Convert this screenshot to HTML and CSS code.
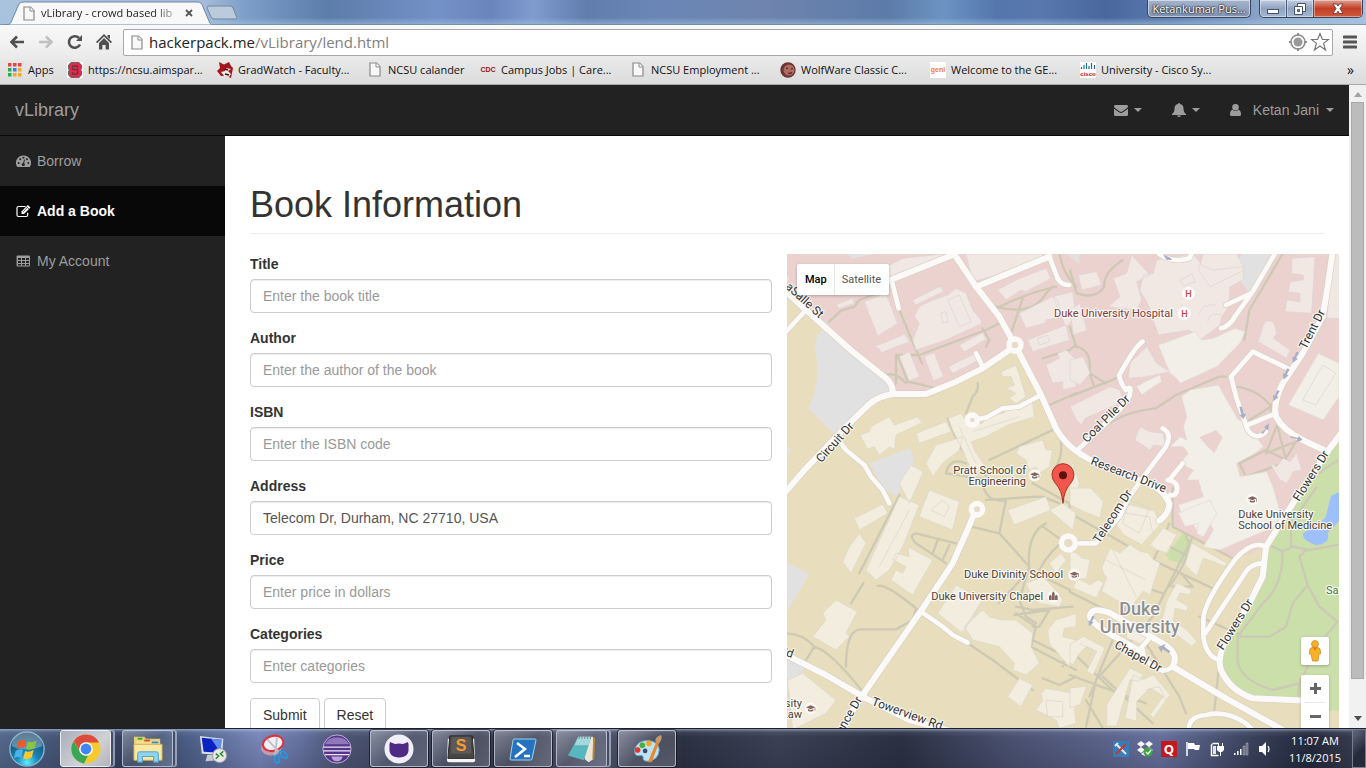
FILE: index.html
```html
<!DOCTYPE html>
<html lang="en">
<head>
<meta charset="utf-8">
<title>vLibrary - crowd based library</title>
<link rel="stylesheet" href="styles.css">
</head>
<body>
<svg class="defs" aria-hidden="true">
  <symbol id="i-page" viewBox="0 0 12 15"><path d="M1 1h6.500l3.500 3.500V14H1z" fill="#f8f8f8" stroke="#8a8a8a" stroke-width="1.200"/><path d="M7 1v4h4" fill="#fff" stroke="#8a8a8a"/></symbol>
  <symbol id="i-cap" viewBox="0 0 40 40"><circle cx="20" cy="20" r="18" fill="#fbf9f5"/><path d="M6 17l14-6 14 6-14 6zM12 22v5q8 5 16 0v-5l-8 4zM32 18h2v9h-2z" fill="#83665f"/></symbol>
  <symbol id="i-arrow" viewBox="0 0 24 34"><path d="M15 0l8 3-9 16 6 2L4 34 3 15l5 2z" fill="#a9afc9"/></symbol>
</svg>
<div class="window">
  <header class="titlebar">
    <div class="tab">
      <svg class="tab-shape" viewBox="0 0 206 24" preserveAspectRatio="none" aria-hidden="true"><path d="M0 24c5 0 6-2 7-5l6-14c1-3 3-4 6-4h173c4 0 5 2 6 5l6 14c1 3 2 4 6 4z" fill="#f8f8f9" stroke="#6f87a8"/></svg>
      <svg class="ico-page" aria-hidden="true"><use href="#i-page"/></svg>
      <span class="tab-title">vLibrary - crowd based lib</span>
      <button class="tab-close" aria-label="Close tab"><svg viewBox="0 0 8 8"><path d="M1 1l6 6M7 1L1 7" stroke="#555" stroke-width="1.800"/></svg></button>
    </div>
    <button class="new-tab" aria-label="New tab"><svg viewBox="0 0 32 15"><path d="M1 3q0-2 2-2h21q2 0 3 2l4 10q0 1-2 1H8q-2 0-3-2z" fill="#bccbdc" stroke="#74869f"/></svg></button>
    <div class="win-controls">
      <button class="profile">Ketankumar Pus...</button>
      <div class="win-buttons">
        <button aria-label="Minimize"><svg viewBox="0 0 14 12"><rect x="1.500" y="6.500" width="11" height="4" fill="#fff" stroke="#4a5468"/></svg></button>
        <button aria-label="Restore"><svg viewBox="0 0 14 12"><path d="M4.500.5h8v8h-8z" fill="#fff" stroke="#4a5468"/><path d="M1.500 3.500h8v8h-8z" fill="#fff" stroke="#4a5468"/><path d="M4.500 6.500h2v2h-2z" fill="#8894ac" stroke="#4a5468"/></svg></button>
        <button class="win-close" aria-label="Close"><svg viewBox="0 0 14 12"><path d="M2 1h3.500L7 3l1.500-2H12L9 5.500l3 5H8.500L7 8.200 5.500 10.500H2l3-5z" fill="#fff" stroke="#5a3038" stroke-width=".8"/></svg></button>
      </div>
    </div>
  </header>
  <div class="toolbar">
    <button class="tool" aria-label="Back"><svg viewBox="0 0 16 16"><path d="M15 8H3M8 2.500L2.500 8 8 13.500" fill="none" stroke="#505050" stroke-width="2.600"/></svg></button>
    <button class="tool" aria-label="Forward"><svg viewBox="0 0 16 16"><path d="M1 8h12M8 2.500L13.500 8 8 13.500" fill="none" stroke="#c0c0c0" stroke-width="2.600"/></svg></button>
    <button class="tool" aria-label="Reload"><svg viewBox="0 0 16 16"><path d="M13 10.500A5.800 5.800 0 1 1 12 4" fill="none" stroke="#505050" stroke-width="2.600"/><path d="M15 1v6H9z" fill="#505050"/></svg></button>
    <button class="tool" aria-label="Home"><svg viewBox="0 0 16 16"><path d="M8 0l8 8-1.200 1.200L8 2.600 1.200 9.200 0 8z" fill="#505050"/><path d="M11.500 1H14v4l-2.500-2zM3 9l5-5 5 5v6.500H9.600V11H6.400v4.500H3z" fill="#505050"/></svg></button>
    <div class="omnibox">
      <svg class="ico-page" aria-hidden="true"><use href="#i-page"/></svg>
      <span class="url">hackerpack.me<span>/vLibrary/lend.html</span></span>
      <svg class="ico-20" viewBox="0 0 20 20" aria-hidden="true"><circle cx="10" cy="10" r="7" fill="none" stroke="#8c8c8c" stroke-width="1.500"/><circle cx="10" cy="10" r="4.500" fill="#999"/><path d="M10 1v3M10 16v3M1 10h3M16 10h3" stroke="#8c8c8c" stroke-width="2"/></svg>
      <svg class="ico-20" viewBox="0 0 20 20" aria-hidden="true"><path d="M10 1.500l2.400 6h6.100l-5 3.900 2 6.600-5.500-4-5.500 4 2-6.600-5-3.900h6.100z" fill="#fff" stroke="#777" stroke-width="1.200"/></svg>
    </div>
    <button class="tool menu" aria-label="Menu"><svg viewBox="0 0 14 14"><path d="M1 2h12M1 7h12M1 12h12" stroke="#555" stroke-width="3" stroke-linecap="round"/></svg></button>
  </div>
  <nav class="bookmarks" aria-label="Bookmarks">
    <a href="#" class="bm apps"><svg viewBox="0 0 14 14"><path d="M0 0h3.500v3.500H0zM5 0h3.500v3.500H5zM10 0h3.500v3.500H10z" fill="#e8453c"/><path d="M0 5h3.500v3.500H0zM0 10h3.500v3.500H0z" fill="#2da94f"/><path d="M5 5h3.500v3.500H5z" fill="#3b7ded"/><path d="M10 5h3.500v3.500H10zM10 10h3.500v3.500H10zM5 10h3.500v3.500H5z" fill="#f3a72b"/></svg><span>Apps</span></a>
    <a href="#" class="bm"><svg viewBox="0 0 16 16"><path fill="#fff" d="M0 0h16v16H0z"/><path d="M4 0h8l3 3v4l-1 1 1 1v4l-3 3H4l-3-3V9l1-1-1-1V3z" fill="#666"/><path d="M5 1h7l2 2v4l-1 1 1 1v4l-2 2H4l-2-2V9l1-1-1-1V3z" fill="#e8284a"/><path d="M5.500 4h5v2M5.500 4v3.500h5V12h-5v-2" stroke="#6c3444" stroke-width="1.300" fill="none"/></svg><span>https://ncsu.aimspar...</span></a>
    <a href="#" class="bm"><svg viewBox="0 0 16 16"><path d="M2 0l5 2.500L12 0l2 4 2 2-1 5-1 5-5-2-5 0-4-5 3-3z" fill="#a3161b"/><path d="M9 6l5 1-3 2 3 3-2 3-5-1-3-4 4-1z" fill="#f3e8e8"/><path d="M8 7l3 1M8 12l4 1" stroke="#2e1212" stroke-width="1.500"/></svg><span>GradWatch - Faculty...</span></a>
    <a href="#" class="bm short"><svg class="ico-page"><use href="#i-page"/></svg><span>NCSU calander</span></a>
    <a href="#" class="bm"><b class="fav cdc">CDC</b><span>Campus Jobs | Care...</span></a>
    <a href="#" class="bm"><svg class="ico-page"><use href="#i-page"/></svg><span>NCSU Employment ...</span></a>
    <a href="#" class="bm"><svg viewBox="0 0 16 16"><circle cx="8" cy="8" r="7.700" fill="#6b3430"/><circle cx="9" cy="8" r="5.500" fill="#b06c62"/><path d="M6 6l2 .5M11 7l2-.5M8 11q2 1 4-.5" stroke="#4a211f" stroke-width="1.200" fill="none"/></svg><span>WolfWare Classic C...</span></a>
    <a href="#" class="bm"><b class="fav geni">geni</b><span>Welcome to the GE...</span></a>
    <a href="#" class="bm"><b class="fav cisco"><svg viewBox="0 0 16 8"><path d="M1.500 5v2M4 3v4M6.500 1v6M9 4v3M11.500 1v6M14.500 3v4" stroke="#1f6f93" stroke-width="1.200"/></svg>cisco</b><span>University - Cisco Sy...</span></a>
    <button class="more" aria-label="More bookmarks">»</button>
  </nav>

  <div class="viewport">
    <div class="page">
      <nav class="navbar">
        <a href="#" class="brand">vLibrary</a>
        <div class="nav-right">
          <a href="#" aria-label="Messages"><svg class="ico-14" viewBox="0 0 14 14"><path d="M0 3.300Q0 2 1.300 2h11.400Q14 2 14 3.300 14 4.500 12.500 5.600L8.300 8.500Q7 9.400 5.700 8.500L1.500 5.600Q0 4.500 0 3.300z"/><path d="M0 5.800l5 3.500q2 1.400 4 0l5-3.500v6q0 1.200-1.300 1.200H1.300Q0 13 0 11.800z"/></svg><i class="caret"></i></a>
          <a href="#" aria-label="Alerts"><svg class="ico-14" viewBox="0 0 14 14"><path d="M7 0q1 0 1 1 3.500.8 3.500 4.500 0 4 2.500 5.500v1H0v-1q2.500-1.500 2.500-5.500Q2.500 1.800 6 1q0-1 1-1zM5 12.500h4Q8.500 14 7 14t-2-1.500z"/></svg><i class="caret"></i></a>
          <a href="#"><svg class="ico-user" viewBox="0 0 11 14"><circle cx="5.500" cy="4.300" r="3.300"/><path d="M2.500 6.800Q0 7.300 0 11.500 0 13 1.500 13h8q1.500 0 1.500-1.500 0-4.200-2.500-4.700Q5.500 9.400 2.500 6.800z"/></svg><span class="user">Ketan Jani</span><i class="caret"></i></a>
        </div>
      </nav>
      <div class="body">
        <nav class="sidebar">
          <a href="#"><svg viewBox="0 0 15 14"><path d="M7.500 1.500A7.300 7.300 0 0 0 1.300 13h12.400A7.300 7.300 0 0 0 7.500 1.500z" fill="#9d9d9d"/><g fill="#222"><circle cx="2.700" cy="9" r="1"/><circle cx="4.200" cy="5.300" r="1"/><circle cx="7.500" cy="3.800" r="1"/><circle cx="10.900" cy="5.300" r="1"/><circle cx="12.300" cy="9" r="1"/><circle cx="7.300" cy="10.500" r="1.600"/></g><path d="M7.300 10.500l1.200-4.800" stroke="#222"/></svg>Borrow</a>
          <a href="#" class="active"><svg viewBox="0 0 15 14"><path d="M9.500 2.500h-7Q1 2.500 1 4v7q0 1.500 1.500 1.500h7.700q1.500 0 1.500-1.500V8.700" fill="none" stroke="#fff" stroke-width="1.200"/><path d="M5.500 10V7.400L11.800 1l2.700 2.600L8 10z" fill="#fff"/><path d="M7 7.900l4.500-4.500M10.500 2.600l2.500 2.500" stroke="#111" stroke-width=".7"/></svg>Add a Book</a>
          <a href="#"><svg viewBox="0 0 15 14"><rect x=".6" y="1.600" width="13.400" height="11" rx="1" fill="#9d9d9d"/><path d="M2 4h3v2H2zM6 4h3v2H6zM10 4h3v2h-3zM2 7h3v2H2zM6 7h3v2H6zM10 7h3v2h-3zM2 10h3v1.600H2zM6 10h3v1.600H6zM10 10h3v1.600h-3z" fill="#222"/></svg>My Account</a>
        </nav>
        <main class="content">
          <h1>Book Information</h1>
          <div class="row">
            <form class="form">
              <div class="group"><label for="title">Title</label><input id="title" type="text" placeholder="Enter the book title"></div>
              <div class="group"><label for="author">Author</label><input id="author" type="text" placeholder="Enter the author of the book"></div>
              <div class="group"><label for="isbn">ISBN</label><input id="isbn" type="text" placeholder="Enter the ISBN code"></div>
              <div class="group"><label for="address">Address</label><input id="address" type="text" value="Telecom Dr, Durham, NC 27710, USA"></div>
              <div class="group"><label for="price">Price</label><input id="price" type="text" placeholder="Enter price in dollars"></div>
              <div class="group"><label for="categories">Categories</label><input id="categories" type="text" placeholder="Enter categories"></div>
              <div class="actions"><button type="submit" class="btn">Submit</button><button type="reset" class="btn">Reset</button></div>
            </form>
            <div class="map">
              <svg class="map-canvas" viewBox="3 12 1656 1500" preserveAspectRatio="xMinYMin slice" role="img" aria-label="Map of Duke University">
                <defs>
                  <g id="roads-main">
                    <path d="M-5 120L60 180 200 305 300 385Q322 405 320 430"/>
                    <path d="M-5 730L60 655 190 520 250 462Q275 440 320 432L420 432 500 400 590 355 670 300"/>
                    <path d="M500 5L570 110 640 200 687 285 765 435 810 535Q835 580 880 610L940 645 1060 690Q1130 710 1150 760 1150 790 1120 812"/>
                    <path d="M300 95L500 15M570 110L680 65 790 20"/>
                    <path d="M1640 5L1625 110 1610 200 1550 310 1490 400Q1460 460 1470 500 1490 540 1550 570L1625 605"/>
                    <path d="M1680 530L1620 610 1530 745 1440 890 1430 980 1390 1060 1330 1150Q1290 1220 1305 1260 1330 1320 1400 1345L1560 1352"/>
                    <path d="M565 790L540 850 500 940 400 1090 230 1335 150 1460 110 1530"/>
                    <path d="M-10 1210L120 1275 240 1345 370 1410 520 1450 600 1530"/>
                    <path d="M1065 1205L960 1145Q905 1110 912 1095 920 1070 970 1088L1130 1180Q1180 1210 1162 1245L1160 1250 1320 1345 1500 1445"/>
                  </g>
                  <g id="roads-minor">
                    <path d="M0 245L60 180M318 95L338 175M790 20L815 85Q825 105 850 105M570 310L590 350"/>
                    <path d="M560 510L600 503 650 475 700 470 765 435"/>
                    <path d="M150 560L180 600 235 645 255 680 290 720 310 760"/>
                    <path d="M405 1085L470 1130 500 1155 545 1178"/>
                    <path d="M1120 12Q1160 40 1210 25L1220 5M1470 5L1400 125 1350 195Q1330 230 1305 235M1395 130L1320 165"/>
                    <path d="M1070 275Q1050 285 1000 375 1000 395 1020 420 1040 400 1030 440L1000 480 870 605"/>
                    <path d="M1505 355L1400 305 1335 380 1350 440 1385 540Q1410 575 1440 545M1385 525L1470 490"/>
                    <path d="M1130 535Q1160 550 1140 590L1080 670 1030 740 1000 800 930 880H880M1190 640L1150 690"/>
                    <path d="M1440 890Q1400 870 1350 925 1250 1060 1252 1110V1160Q1260 1220 1300 1230M1430 940Q1390 940 1370 980L1310 1070 1258 1150"/>
                    <path d="M1130 1262Q1160 1260 1162 1240M1060 1200L1090 1165M1070 1200Q1070 1240 1130 1262M1210 1450Q1200 1400 1260 1395 1320 1380 1380 1420L1420 1460"/>
                  </g>
                </defs>
                <path class="sand" d="M0 0h1680v1530H0z"/>
                <path class="pink" d="M0 0h1680v560l-130 150-108 180-100 40-185-105V760L1060 690 940 645 860 600 765 435 687 285 590 355 420 432H320L300 385 0 120z"/>
                <g class="grey"><path d="M115 235Q80 260 90 310 105 400 68 475L145 555 315 430 300 385zM250 640L370 595Q385 605 380 650L330 740 290 712zM0 935L70 972 0 1090zM0 1210L62 1245 0 1330zM185 12H262L200 26zM830 5H880V40zM1375 0H1460L1390 130 1340 60z"/><path d="M0 580L15 600 0 620z"/></g>
                <path class="green" d="M1680 560L1620 620 1530 750 1442 890 1435 985 1390 1065 1320 1170Q1290 1220 1320 1280 1360 1335 1430 1340L1560 1355 1620 1382H1680zM1140 915L1195 845 1230 890 1200 945 1150 930z"/>
                <path class="water" d="M1680 715L1635 738 1618 805 1552 850Q1545 870 1590 886 1635 880 1625 850L1680 790z"/>

                <g class="footpaths">
                  <path d="M130 215L165 182 205 170 220 150 300 120M340 180L390 300 408 340M330 400V315L400 315 600 240 640 220M335 315L365 395 440 412M300 375Q330 365 360 400M590 235L610 270 600 290M630 170Q740 200 780 130L800 110M630 175Q720 130 810 110M710 145L675 250M820 10Q830 70 870 110M770 325L850 300 870 285M790 465L870 430"/>
                  <path d="M575 400Q580 420 560 440L540 490M485 505L520 590 580 650 610 690M610 630L800 540M825 570Q830 620 810 650M610 690L480 670Q490 620 540 640"/>
                  <path d="M852 60L872 130Q930 150 955 110 950 70 1010 30M852 230L870 290Q920 300 910 370L960 400M852 440L990 385M910 370L925 410M1490 12L1390 180 1375 270M930 550Q1000 485 1110 475L1170 435 1300 380H1320M1350 410Q1420 420 1455 470V500M1500 370L1455 470 1390 510M1475 520L1440 610 1530 575 1490 640 1380 680 1360 640 1440 600 1500 630 1475 530"/>
                  <path d="M340 735L220 970M232 1000L195 1060M275 1008Q300 1000 390 1075L380 1110 330 1138H220Q180 1145 180 1250M0 1150Q50 1150 85 1190L60 1230M85 1190Q130 1200 230 1325M510 880L390 850Q365 855 390 880L480 940M455 870L440 910M490 885L470 930M380 1065L400 1085M590 700Q600 760 660 750L640 850 730 950 700 1050 720 1100 750 1120M555 830L640 850M600 750Q740 740 770 740L820 760M740 700L850 760 852 790M770 830L820 865M780 820Q720 850 730 960L640 1060M852 860Q790 900 760 960M860 1070L740 1080 690 1070M690 1090L750 1130 735 1190 870 1260M740 1170L840 1220 830 1250M545 1180L620 1230 740 1320M770 1285L820 1305 870 1280M730 960L852 1020M685 1095L790 1080 760 1130H740"/>
                  <path d="M852 790L1110 935 1280 1015M1160 714V830L1340 925M850 1025L960 1080M1150 820L1070 1010 1130 1030M1220 860L1100 1100 930 1290 900 1430M1200 860Q1230 900 1150 1010M1160 1010H1220L1185 970M1150 890L1210 920M1025 1060L910 1340M852 1275L1080 1360M852 1200L1000 1340M1080 1180L1180 1340 1200 1390M900 1350L990 1500M950 1280L1100 1420M1300 1240L1285 1380M1240 1100L1330 1140"/>
                  <path d="M1450 885L1490 905 1520 890 1570 900 1680 880M1515 890V820L1590 714M1490 905Q1490 1010 1430 1060L1355 1160M1355 1160H1450L1500 1130 1520 1060 1565 1005 1540 920 1560 900M1565 1005L1600 1070 1655 1115 1600 1180 1540 1300 1460 1320Q1360 1290 1355 1230V1150M1540 1300L1535 1345M1600 670Q1620 650 1660 630"/>
                </g>

                <g class="bld-pink">
                  <path d="M235 155L300 130 335 220 275 258zM380 150L465 108 472 125 388 165zM265 290L355 253 362 262 370 275 285 308 280 296zM340 320L370 305 400 380 370 392zM415 320L445 308 472 380 442 392zM487 350L565 312 575 332 500 370zM380 270L400 220 385 200 400 170 440 150 485 135 510 115 540 130 560 180 585 210 585 222 500 260 480 270 390 300zM520 285L590 248 600 268 535 305zM150 165L200 145 205 160 160 175zM350 25L470 12 480 30 300 95 285 60zM540 12H770L760 40 690 50 680 62 560 95zM635 120L690 90 780 55 795 85 720 125 705 120 660 150zM700 190L800 140 815 150 820 170 830 200 780 210 775 220 720 235zM725 270L840 225 850 270 740 305zM780 345L820 325 815 310 840 300 870 330V410L830 420 830 395 800 400zM800 140L860 125 870 200 840 230z"/>
                  <g transform="translate(852 0)"><path d="M25 75L80 65 95 105 35 120zM130 85L170 70 185 15 240 75 200 95 215 150 200 180 115 170 150 140zM210 120L220 75 250 70 260 30 370 12 400 50 430 60 520 50 520 90 480 110 475 170 455 200 450 225 390 270 360 240 265 255 235 165zM385 60L400 12 500 12 525 60 420 110zM0 180L30 160 50 240 10 255zM180 340L230 290 260 340 300 365 230 380 175 385zM0 330L40 320 60 370 30 405 0 390zM0 470L120 410 150 420 160 455 45 505 35 525 20 510zM195 570L210 530 240 545 280 550 285 590 250 585 240 600zM665 25L735 20 725 190 645 185 650 150 690 155V130L655 125 660 95 700 90V75L665 70zM580 225L590 212 610 215 620 250 610 265 660 300 650 325 565 275zM600 640L620 650 640 625 660 635 680 610 695 660 670 665 650 700 630 690zM790 12H810V205H770z"/></g>
                </g>
                <g class="bld-light">
                  <g transform="translate(852 0)"><path d="M265 285L375 245 395 270 430 265 495 235 525 245 510 280 440 350 330 400 320 385 300 370zM335 440L360 420 445 405 505 510 535 515 540 535 580 590 555 610 500 640 510 680 590 665 610 714 640 820 520 870 450 900 400 890 430 840 410 800 390 810 410 850 390 860 365 815 340 810 325 765 400 740 385 690 350 690 370 660 330 640 355 610 340 590 300 590 330 560 350 570 340 530 350 500zM200 410L225 395 270 375 275 395 235 420 215 435zM745 310L807 340V440L760 510 655 465z"/><path d="M325 790L345 780 420 750 440 790 400 860 380 850 385 820 345 830z"/></g>
                </g>
                <path class="pink" d="M1240 562L1290 540 1310 562 1285 610 1260 585z"/>
                <g class="bld">
                  <path d="M222 555L250 545 255 530 310 500 325 525 395 500 408 518 330 555 325 600 312 590 280 615 265 590 245 598zM390 550L480 515 495 545 400 580zM420 640L450 585 500 570 530 560 520 600 470 640 440 680zM487 505L525 490 545 520 590 520 600 500 650 490 690 465 740 460 745 500 665 525 600 560 555 575 570 610 600 650 560 670 530 600 500 540zM645 365L690 345 700 375 720 440 690 460 670 445 690 430 660 415 685 405 675 380 650 380zM690 610L700 590 770 570 780 600 800 600 790 650 760 670 750 650 730 660 720 630zM340 700L375 645 412 665 370 760zM205 805L290 762 305 790 220 840zM170 935L190 890 220 850 240 880 195 970zM240 960L290 850 340 740 400 765 350 890 310 960 270 990zM410 770L430 720 520 755 500 840 400 800zM315 990L330 960 350 970 360 950 320 930 330 910 370 920 365 890 440 930 380 1035zM80 1160L120 1110 110 1090 150 1050 215 1085 200 1110 180 1150 190 1160 150 1200zM455 1090L510 1005 590 1050 530 1150zM535 1130L590 1080 610 1100 645 1110 690 1110 740 1150 735 1190 760 1240 720 1275 680 1260 685 1240 640 1190 600 1180 560 1170zM665 1340L700 1285 740 1305 705 1370zM665 780L780 740 795 780 685 825zM790 780L830 760 870 790 860 840zM790 940L825 910 840 930 810 970zM720 1000L770 980 800 1010 830 1050 820 1070 760 1060 735 1030zM5 1290L50 1270 150 1350 120 1390 20 1440zM750 1380L770 1350 765 1330 780 1315 860 1330 870 1420 820 1435 810 1410zM790 1180L785 1140 810 1110 870 1090V1130L835 1135 830 1160 870 1170 850 1250zM830 680L860 640 880 700 870 740z"/>
                  <g transform="translate(852 714)"><path d="M0 0H60L100 40 90 90 40 70 0 50zM0 190L20 195 35 210 60 215 50 270 0 280zM20 270L60 290 85 275 100 285 80 330 10 300zM140 110L155 70 180 50 255 70 270 110 215 170 160 140zM95 240L120 180 150 195 180 170 210 190 235 195 250 215 270 225 240 320 220 310 180 360 95 310 110 270 100 255zM280 120L300 130 320 140 290 195 260 185 240 170zM345 230L365 165 470 225 465 235 400 210 380 265zM290 340L320 285 365 305 360 320 330 315 320 335 355 355 350 370 315 360 310 400 350 425 380 460 365 475 320 440 275 400zM0 470L40 445 105 480 70 560 50 550 80 490 50 475 25 500 10 530 0 525zM165 690L190 560 220 575 250 560 300 620 250 690 240 680 280 625 240 600 200 640 200 700zM110 650L180 540 220 560 205 580 180 575 140 714H110zM0 600L50 595 30 650 0 660zM170 420L240 440 220 470 170 450z"/></g>
                </g>
                <g class="outline"><path d="M485 150L520 135 555 215 520 230zM465 190L480 185 485 215 470 220zM755 265L785 255 790 275 760 285zM520 530L570 640M560 545L700 500M435 780L470 750 490 770 475 800zM1182 90L1218 72 1228 95 1192 108zM1240 190Q1250 160 1290 165M1265 215Q1270 185 1305 195M1550 450L1610 345 1650 370 1590 465zM1020 790L1090 800 1100 850M960 930L1080 990M980 900L1050 1040M1080 1320L1120 1310 1140 1350M880 1180L920 1200 900 1240M780 1350L830 1355 830 1400 785 1400zM525 1150L590 1050M280 950L370 780M1030 750L1090 775 1060 850 1010 820z"/></g>

                <use href="#roads-minor" class="casing minor"/><use href="#roads-main" class="casing main"/>
                <use href="#roads-minor" class="fill minor"/><use href="#roads-main" class="fill main"/>
                <g class="circles"><circle cx="687" cy="285" r="18"/><circle cx="559" cy="510" r="15"/><circle cx="573" cy="778" r="17"/><circle cx="847" cy="879" r="21"/></g>
                <path class="fill minor" d="M1145 690Q1180 695 1172 725 1165 740 1152 735"/>
                <g class="arrows">
                  <use href="#i-arrow" x="1516" y="305" width="24" height="34"/><use href="#i-arrow" x="1488" y="355" width="24" height="34"/><use href="#i-arrow" x="1458" y="420" width="24" height="34"/><use href="#i-arrow" x="905" y="1097" width="22" height="32"/>
                  <path d="M1116 1192l22-10-3 8 18 14-4 6-20-12-2 10zM1360 470l8 0 6 22h6l-8 16-12-14h6zM1425 548l14-10-4-8 14-10-2 20-6-2-10 14zM1514 558l22 6 2-6 12 12-18 6 2-8-22-6zM1130 12l24 12 4 6-16 0z" fill="#a9afc9"/>
                </g>

                <g class="labels">
                  <text transform="translate(-18 100) rotate(42)">LaSalle St</text>
                  <text transform="translate(106 640) rotate(-48)">Circuit Dr</text>
                  <text transform="translate(903 580) rotate(-45)">Coal Pile Dr</text>
                  <text transform="translate(912 642) rotate(21)">Research Drive</text>
                  <text transform="translate(1560 300) rotate(-63)">Trent Dr</text>
                  <text transform="translate(1540 756) rotate(-58)">Flowers Dr</text>
                  <text transform="translate(940 882) rotate(-57)">Telecom Dr</text>
                  <text transform="translate(1312 1202) rotate(-58)">Flowers Dr</text>
                  <text transform="translate(983 1192) rotate(29)">Chapel Dr</text>
                  <text transform="translate(255 1364) rotate(20)">Towerview Rd</text>
                  <text transform="translate(144 1496) rotate(-60)">Science Dr</text>
                  <text transform="translate(-22 1210) rotate(20)">Rd</text>
                  <text class="poi" x="720" y="672" text-anchor="end">Pratt School of</text>
                  <text class="poi" x="720" y="704" text-anchor="end">Engineering</text>
                  <text class="poi" x="534" y="983">Duke Divinity School</text>
                  <text class="poi" x="436" y="1049">Duke University Chapel</text>
                  <text class="poi" x="1357" y="803">Duke University</text>
                  <text class="poi" x="1357" y="836">School of Medicine</text>
                  <text class="poi" x="48" y="1371" text-anchor="end">University</text>
                  <text class="poi" x="48" y="1404" text-anchor="end">of Law</text>
                  <text class="poi hospital" x="804" y="200">Duke University Hospital</text>
                  <text class="poi park" x="1620" y="1033">Sarah P.</text>
                  <text class="campus" x="1061" y="1094" text-anchor="middle">Duke</text>
                  <text class="campus" x="1061" y="1149" text-anchor="middle">University</text>
                </g>
                <use href="#i-cap" x="726" y="656" width="40" height="40"/><use href="#i-cap" x="845" y="954" width="40" height="40"/><use href="#i-cap" x="1379" y="728" width="40" height="40"/><use href="#i-cap" x="54" y="1355" width="40" height="40"/>
                <circle cx="802" cy="1040" r="18" fill="#fbf9f5"/><path d="M789 1050v-12l4-4 4 4v12zM798 1050v-20l4-6 4 6v20zM807 1050v-12l4-4 4 4v12z" fill="#83665f"/>
                <g class="h-mark"><circle cx="1207" cy="130" r="19"/><circle cx="1195" cy="190" r="19"/><text x="1207" y="140">H</text><text x="1195" y="200">H</text></g>
                <g class="pin"><path d="M831 760Q828 720 808 700 798 688 798 674A33 33 0 0 1 864 674Q864 688 854 700 834 720 831 760z"/><circle cx="831" cy="676" r="12"/></g>
              </svg>
              <div class="map-type"><button class="on">Map</button><button>Satellite</button></div>
              <div class="map-tools">
                <button class="pegman" aria-label="Street View"><svg viewBox="0 0 14 22"><circle cx="7" cy="4" r="3.500"/><path d="M4 7.500h6q2.500.5 2.500 4V14H11l-1 7H4.500L3 14H1.500v-3q0-3 2.500-3.500z"/><path class="v" d="M5 8h4L7 11z"/></svg></button>
                <div class="zoom"><button aria-label="Zoom in"><svg viewBox="0 0 11 11"><path d="M5.500 0v11M0 5.500h11"/></svg></button><button aria-label="Zoom out"><svg viewBox="0 0 11 11"><path d="M0 5.500h11"/></svg></button></div>
              </div>
            </div>
          </div>
        </main>
      </div>
    </div>
    <div class="scrollbar" aria-hidden="true"><i class="up"></i><i class="thumb"></i><i class="down"></i></div>
  </div>

  <footer class="taskbar">
    <button class="start" aria-label="Start"><svg viewBox="0 0 40 40"><defs><radialGradient id="orb" cx=".5" cy=".9" r=".9"><stop offset="0" stop-color="#5ff0ff"/><stop offset=".35" stop-color="#1886b8"/><stop offset="1" stop-color="#1c3c5c"/></radialGradient></defs><circle cx="20" cy="20" r="18" fill="url(#orb)" stroke="#7fb4cf" stroke-width="1.500"/><path d="M4 17a16 15 0 0 1 32 0q-16 7-32 0z" fill="#fff" opacity=".3"/><path d="M11 12q4-3 8-1l-2 8q-4-2-8 1z" fill="#ee5b24"/><path d="M21 12q4 2 9-1l-2 8q-4 3-9 1z" fill="#8cc63f"/><path d="M8 22q4-3 8-1l-2 8q-4-2-8 1z" fill="#49b3ee"/><path d="M18 22q4 2 9-1l-2 8q-4 3-9 1z" fill="#fdc82f"/></svg></button>
    <div class="tasks">
      <button class="task open current stack" aria-label="Chrome"><svg viewBox="0 0 30 30"><circle cx="15" cy="15" r="14.500" fill="#f6c92c"/><path d="M15 .5A14.500 14.500 0 0 1 28 8.500H15A6.500 6.500 0 0 0 9.400 18L2.800 7Q7 .5 15 .5z" fill="#dd4b3e"/><path d="M2.600 7.200L9.400 18.300Q12 22 17 21.400L13 29.400A14.500 14.500 0 0 1 2.600 7.200z" fill="#3aa757"/><circle cx="15" cy="15" r="6.800" fill="#fff"/><circle cx="15" cy="15" r="5.400" fill="#4285f4"/></svg></button>
      <button class="task open stack" aria-label="Explorer"><svg viewBox="0 0 32 30"><path d="M1 4V2h11l2 2h15v20H1z" fill="#e8cf70"/><path d="M3 6h25v19H3z" fill="#f5df8e"/><path d="M5 3h5v2H5z" fill="#2fae3a"/><path d="M12 5h6v2h-6z" fill="#d84a2c"/><path d="M20 7h7v2h-7z" fill="#3788d8"/><path d="M1 10h30v17H1z" fill="#fae9a4" stroke="#cfae4f"/><path d="M5 29V20q0-2 2-2h18q2 0 2 2v9h-5v-6H10v6z" fill="#8fd3ee" stroke="#4c9fc8"/></svg></button>
      <button class="task" aria-label="Remote Desktop"><svg viewBox="0 0 32 32"><path d="M2 2l25 3-1 17-22-1z" fill="#d5dbe4"/><path d="M4 4l21 2-1 14-18-1z" fill="#0a22c0"/><path d="M14 5l11 1-1 14z" fill="#5f8df0"/><path d="M10 22h9l2 6-13 1z" fill="#c7ccd4"/><circle cx="23" cy="23" r="7.500" fill="#e8e8e8" stroke="#999"/><path d="M19 21l3 2.500-3 3M27 18.500l-3 2.500 3 3" stroke="#2d8a35" stroke-width="1.600" fill="none"/></svg></button>
      <button class="task" aria-label="Snipping Tool"><svg viewBox="0 0 32 32"><ellipse cx="12" cy="15" rx="11" ry="8" fill="#c99aaa"/><ellipse cx="14" cy="10" rx="11" ry="8" transform="rotate(-15 14 10)" fill="#f4f0f4" stroke="#dc3340" stroke-width="2.200"/><path d="M8 6l14 15M18 4l-2 20" stroke="#b8c0cc" stroke-width="2"/><ellipse cx="25" cy="22" rx="5" ry="2.500" transform="rotate(40 25 22)" fill="none" stroke="#2697dd" stroke-width="2"/><ellipse cx="18" cy="27" rx="2.500" ry="4" transform="rotate(-15 18 27)" fill="none" stroke="#2697dd" stroke-width="2"/></svg></button>
      <button class="task" aria-label="Eclipse"><svg viewBox="0 0 32 32"><circle cx="16" cy="16" r="15" fill="#57348c" stroke="#c5b8dc"/><path d="M3 11a14 12 0 0 1 26 0z" fill="#8f78b8"/><path d="M1.500 14h29M1.500 18h29M3 22h26" stroke="#eee8f6" stroke-width="1.500"/><path d="M10 24h12q-1 5-6 5t-6-5z" fill="#b9a4d8"/></svg></button>
      <button class="task open" aria-label="GitHub"><svg viewBox="0 0 30 30"><circle cx="15" cy="15" r="14.500" fill="#f0eff8"/><path d="M6 8l5 2q4-1 8 0l5-2q1 3 .5 6 1 9-9.500 9.500Q4.500 23 5.500 14 5 11 6 8z" fill="#4e2a84"/></svg></button>
      <button class="task open" aria-label="Sublime Text"><svg viewBox="0 0 32 30"><path d="M2 4h28l1 23q0 2-2 2H3q-2 0-2-2z" fill="#f4f4f2"/><path d="M4 1h24l2 24H2z" fill="#474747" stroke="#222"/><path d="M6 2h20l1 18H5z" fill="#5c5a58"/><text x="16" y="17" text-anchor="middle" class="glyph-s">S</text></svg></button>
      <button class="task open" aria-label="PowerShell"><svg viewBox="0 0 30 30"><path d="M7 5h20q1 0 1 1l-4 19q0 1-2 1H3q-1 0-1-1L5 6q0-1 2-1z" fill="#2573bf" stroke="#9bd4f4"/><path d="M9 9l8 6-10 8M16 22h6" fill="none" stroke="#fff" stroke-width="2.500"/></svg></button>
      <button class="task open stack" aria-label="Notepad"><svg viewBox="0 0 32 30"><path d="M12 2h16v24l-5 3-4-3z" fill="#e9e6d8"/><path d="M28 3h2l-1 23h-2z" fill="#b88a32"/><path d="M12 2h14l-8 25L1 22z" fill="#58b6bf"/><path d="M12 2h14l-3 9-15 0z" fill="#a4d8dc"/><path d="M13 0v4M16 0v4M19 0v4M22 0v4M25 0v4" stroke="#777"/></svg></button>
      <button class="task open" aria-label="Paint"><svg viewBox="0 0 32 30"><path d="M3 15Q6 6 17 6q12 1 12 10-1 11-12 12-6 0-5-4 0-3-4-2-6 1-5-7z" fill="#bfe3f6" stroke="#6eaed0"/><circle cx="6" cy="16" r="3" fill="#e5372c"/><circle cx="11" cy="11" r="3" fill="#48b03c"/><circle cx="18" cy="9" r="3" fill="#f2a62b"/><circle cx="14" cy="17" r="2.500" fill="#3c4a66"/><path d="M17 29l9-22 3 1-8 21z" fill="#e68a2b"/><path d="M25 7q-1-5 6-7 2 4-2 9z" fill="#c39a6a"/></svg></button>
    </div>
    <div class="tray">
      <svg viewBox="0 0 16 16"><path d="M0 0h16v16H0z" fill="#3a7cb8"/><path d="M3 3l10 10M5 2l-3 3" stroke="#e6e6e6" stroke-width="2"/><path d="M13 3L3 13" stroke="#c3392f" stroke-width="2"/></svg>
      <svg viewBox="0 0 16 16"><path d="M4 0l4 3-4 3-4-3zM12 0l4 3-4 3-4-3zM4 6l4 3-4 3-4-3zM12 6l4 3-4 3-4-3zM8 10l4 3-4 2-4-2z" fill="#f4f4f4"/><circle cx="11" cy="11" r="4.500" fill="#39a83f"/><path d="M9 11l2 2 3-4" fill="none" stroke="#fff" stroke-width="1.300"/></svg>
      <b class="q">Q</b>
      <svg viewBox="0 0 16 16"><path d="M2 1v14" stroke="#fff" stroke-width="1.500"/><path d="M3 2h6l1 2h5l-1 5h-4L9 8H3z" fill="#fff"/></svg>
      <svg viewBox="0 0 16 16"><path d="M3.500 2.500h6M2.500 3.500v11h7M2.500 3.500h1" fill="none" stroke="#fff" stroke-width="1.500"/><path d="M8 5h7v4l-2 2H10L8 9zM9 2h1v3H9zM13 2h1v3h-1zM11 10h1v5h-1z" fill="#fff"/><path d="M4 5h3v8H4z" fill="#dfe6ee"/></svg>
      <svg viewBox="0 0 16 16"><path d="M1 12h1.500v2H1zM4 10h1.500v4H4zM7 8h1.500v6H7z" fill="#fff"/><path d="M10 5h2v9h-2zM13 2h2v12h-2z" fill="#6a7084" stroke="#b0b5c2" stroke-width=".5"/></svg>
      <svg viewBox="0 0 16 16"><path d="M2 5h3l4-4v14l-4-4H2z" fill="#fff"/><path d="M11 5q2 3 0 6" fill="none" stroke="#fff" stroke-width="1.200"/></svg>
      <div class="clock"><span>11:07 AM</span><span>11/8/2015</span></div>
    </div>
    <button class="show-desktop" aria-label="Show desktop"></button>
  </footer>
</div>
</body>
</html>
```

FILE: styles.css
```css
* { box-sizing: border-box; }
body { margin: 0; font-family: "Liberation Sans", Arial, sans-serif; font-size: 14px; line-height: 20px; color: #333; }
button { font: inherit; color: inherit; border: 0; background: none; padding: 0; }
a { text-decoration: none; color: inherit; }
svg { display: block; flex: none; }
.defs { position: absolute; width: 0; height: 0; }
.window { display: flex; flex-direction: column; height: 100vh; overflow: hidden; }
.ico-page { width: 12px; height: 15px; }
.ico-20 { width: 20px; height: 20px; }

/* Browser frame */
.titlebar, .toolbar, .bookmarks, .taskbar { flex: none; font-family: "Open Sans", "Noto Sans", sans-serif; }
.titlebar {
  display: flex; align-items: flex-end; height: 25px; padding-left: 5px;
  background:
    linear-gradient(180deg, transparent 70%, rgba(160, 195, 225, .5) 94%, #6b809e 100%),
    linear-gradient(90deg, #a9c3de 0, #a4bbd9 15%, #7c9ec8 18%, #5c7caa 24%, #7491c6 32%, #6a85bc 36%, #809bce 39%, #607dae 43%, #6a86b6 48%, #6f84ae 56%, #5c7ba9 65%, #6c93c2 69%, #5476ac 73%, #5878ae 76%, #49679d 81%, #5d7db2 86%, #8fa9cc 93%, #a9c0dc 100%);
}
.tab { position: relative; display: flex; align-items: center; width: 206px; height: 24px; padding: 0 14px 0 18px; gap: 6px; }
.tab > * { position: relative; }
.tab .tab-shape { position: absolute; inset: 0; width: 100%; height: 100%; }
.tab-title { flex: 1; white-space: nowrap; font-size: 11px; color: #222; -webkit-mask-image: linear-gradient(90deg, #000 84%, rgba(0, 0, 0, .3) 100%); mask-image: linear-gradient(90deg, #000 84%, rgba(0, 0, 0, .3) 100%); }
.tab-close { margin: 0 4px; }
.tab-close svg { width: 8px; height: 8px; }
.new-tab { align-self: center; margin-left: -5px; }
.new-tab svg { width: 32px; height: 15px; }
.win-controls { display: flex; align-self: flex-start; gap: 8px; margin-left: auto; padding-right: 3px; }
.profile { width: 104px; height: 18px; border: 1px solid #39455c; border-top: 0; border-radius: 0 0 5px 5px; background: linear-gradient(#a5b4cc, #7f92b2); box-shadow: inset 0 0 0 1px rgba(255, 255, 255, .5); color: #fff; font-size: 11px; line-height: 16px; text-shadow: 0 0 2px #000, 0 0 2px #000; white-space: nowrap; }
.win-buttons { display: flex; height: 18px; border: 1px solid #39455c; border-top: 0; border-radius: 0 0 5px 5px; overflow: hidden; background: linear-gradient(#c3cfe0, #8fa2c0 50%, #a5b8d2); }
.win-buttons button { display: grid; place-items: center; width: 27px; border-right: 1px solid #4a5870; box-shadow: inset 0 0 0 1px rgba(255, 255, 255, .4); }
.win-buttons .win-close { width: 48px; border-right: 0; background: linear-gradient(#dfa193, #c23f26 50%, #cf5a3e); }
.win-buttons svg { width: 14px; height: 12px; }
.toolbar { display: flex; align-items: center; height: 34px; padding: 0 9px; gap: 13px; background: linear-gradient(#f9f9f9, #eaeaea); }
.tool svg { width: 16px; height: 16px; }
.menu svg { width: 14px; height: 14px; }
.omnibox { display: flex; flex: 1; align-items: center; gap: 2px; height: 27px; margin-right: -3px; margin-left: -2px; padding: 0 2px 0 7px; border: 1px solid #a8a8a8; border-radius: 2px; background: #fff; }
.url { flex: 1; margin-left: 4px; font-size: 15px; color: #222; }
.url span { color: #808080; }
.bookmarks { display: flex; align-items: center; height: 26px; padding: 0 8px 4px; background: linear-gradient(#e8e8e8, #dcdcdc); border-bottom: 1px solid #a9a9a9; font-size: 11px; color: #111; }
.bm { display: flex; flex: none; align-items: center; gap: 5px; width: 150px; white-space: nowrap; }
.bm svg { width: 16px; height: 16px; }
.bm .ico-page { width: 12px; height: 15px; margin: 0 2px; }
.bm.apps { width: 59px; gap: 6px; }
.apps svg { width: 14px; height: 14px; }
.bm.short { width: 113px; }
.fav { display: flex; flex-direction: column; align-items: center; justify-content: center; width: 16px; height: 16px; font-family: "Liberation Sans", sans-serif; line-height: 8px; }
.cdc { font-size: 7px; color: #a00f14; }
.geni { background: #fff; font-size: 7px; color: #ee7f22; }
.cisco { background: #fff; font-size: 6px; color: #b01020; }
.cisco svg { width: 16px; height: 8px; }
.more { margin-left: auto; padding-right: 4px; font-size: 14px; }

/* Page */
.viewport { display: flex; flex: 1; min-height: 0; background: #fff; }
.page { flex: 1; overflow: hidden; background: #222; }
.navbar { display: flex; justify-content: space-between; align-items: center; height: 51px; border-bottom: 1px solid #080808; color: #9d9d9d; }
.brand { padding: 0 15px; font-size: 18px; }
.nav-right { display: flex; }
.nav-right a { display: flex; align-items: center; gap: 6px; padding: 0 15px; }
.nav-right svg { fill: #9d9d9d; }
.ico-14 { width: 14px; height: 14px; }
.ico-user { width: 11px; height: 14px; }
.user { margin: 0 1px 0 6px; }
.caret { border: 4px solid transparent; border-top-color: #9d9d9d; border-bottom: 0; }
.body { display: flex; }
.sidebar { flex: none; width: 225px; color: #9d9d9d; }
.sidebar a { display: flex; align-items: center; gap: 6px; height: 50px; padding: 0 16px; }
.sidebar svg { width: 15px; height: 14px; }
.sidebar .active { background: #080808; color: #fff; font-weight: bold; }
.content { flex: 1; min-width: 0; padding: 8px 25px 0; background: #fff; }
h1 { margin: 40px 0 20px; padding-bottom: 7px; border-bottom: 1px solid #eee; font-size: 36px; font-weight: 400; line-height: 42px; }
.row { display: flex; margin: 0 -15px; }
.form { width: 50%; padding: 0 15px; }
.group { margin-bottom: 15px; }
label { display: block; margin-bottom: 5px; font-weight: bold; }
input { display: block; width: 100%; height: 34px; padding: 6px 12px; border: 1px solid #ccc; border-radius: 4px; box-shadow: inset 0 1px 1px rgba(0, 0, 0, .075); background: #fff; font: inherit; color: #555; }
input::placeholder { color: #999; opacity: 1; }
.actions { display: flex; gap: 4px; }
.btn { height: 34px; padding: 0 12px; border: 1px solid #ccc; border-radius: 4px; background: #fff; color: #333; }

/* Map */
.map { position: relative; width: 50%; height: 500px; overflow: hidden; font-family: Roboto, sans-serif; }
.map-canvas { width: 100%; height: 100%; }
.sand { fill: #e8debd; }
.pink { fill: #ebd2cf; }
.grey { fill: #e1e1e2; }
.green { fill: #cadfaa; }
.water { fill: #9dc0fb; }
.bld-pink { fill: #f1e8e4; stroke: #ddd3d6; stroke-width: 2; }
.bld-light { fill: #f2efe8; stroke: #e2dad2; stroke-width: 2; }
.bld { fill: #f2eddf; stroke: #ddd7c8; stroke-width: 2; }
.outline { fill: none; stroke: #d9d3cf; stroke-width: 2; }
.footpaths { fill: none; stroke: #cdc9b5; stroke-width: 7; stroke-linejoin: round; stroke-linecap: round; }
.casing, .fill { fill: none; stroke-linecap: round; stroke-linejoin: round; }
.casing { stroke: #d8d0c2; }
.fill { stroke: #fcfaf8; }
.casing.main { stroke-width: 22px; }
.fill.main { stroke-width: 18px; }
.casing.minor { stroke-width: 18px; }
.fill.minor { stroke-width: 14px; }
.circles { fill: #e8dcc8; stroke: #fcfaf8; stroke-width: 16; }
.labels { font-size: 36px; fill: #333; stroke: #fff; stroke-opacity: .8; stroke-width: 7; stroke-linejoin: round; paint-order: stroke; }
.poi { font-size: 33px; fill: #4b4038; }
.hospital { fill: #7c3b36; }
.park { fill: #3f7a45; }
.campus { font-size: 54px; font-weight: 500; fill: #8d8f8f; }
.h-mark { fill: #fff; font-size: 27px; text-anchor: middle; }
.h-mark text { fill: #d23f31; font-weight: 500; }
.pin path { fill: #f2554b; stroke: #a93226; stroke-width: 3; }
.pin circle { fill: #5d120f; }
.map-type { position: absolute; top: 10px; left: 10px; display: flex; height: 31px; border-radius: 2px; background: #fff; box-shadow: 0 1px 3px rgba(0, 0, 0, .25); font-size: 11px; color: #565656; }
.map-type button { padding: 0 8px 0 7px; }
.map-type .on { padding: 0 7px 0 8px; border-right: 1px solid #e4e4e4; color: #000; font-weight: 500; }
.map-tools { position: absolute; right: 10px; bottom: 24px; display: flex; flex-direction: column; gap: 10px; width: 28px; }
.pegman, .zoom { border-radius: 2px; background: #fff; box-shadow: 0 1px 3px rgba(0, 0, 0, .25); }
.pegman { display: grid; place-items: center; height: 28px; }
.pegman svg { width: 14px; height: 22px; fill: #f8b324; stroke: #b8791b; stroke-width: .6; }
.pegman .v { fill: #e87722; stroke: none; }
.zoom button { display: grid; place-items: center; width: 28px; height: 27px; }
.zoom button + button { height: 28px; background: linear-gradient(#e6e6e6, #e6e6e6) center top / 20px 1px no-repeat; }
.zoom svg { width: 11px; height: 11px; fill: none; stroke: #666; stroke-width: 3; }

/* Scrollbar */
.scrollbar { display: flex; flex: none; flex-direction: column; align-items: center; gap: 5px; width: 17px; padding: 7px 0; background: #f1f1f1; }
.up { border: 4px solid transparent; border-bottom: 5px solid #a3a3a3; border-top: 0; }
.thumb { width: 13px; height: 577px; border: 1px solid #a8a8a8; background: #bcbcbc; }
.down { margin-top: auto; border: 4px solid transparent; border-top: 5px solid #505050; border-bottom: 0; }

/* Taskbar */
.taskbar {
  display: flex; align-items: stretch; height: 40px; padding-left: 7px; border-top: 1px solid #1b2030; color: #fff;
  background:
    linear-gradient(rgba(200, 215, 240, .55) 0, rgba(200, 215, 240, .1) 3px, transparent 8px, rgba(10, 15, 30, .15)),
    linear-gradient(90deg, #53678a 0, #35415e 9%, #46597f 13%, #7886b8 19%, #65719f 22%, #4c5573 25%, #363c50 35%, #50556c 44%, #2c3143 50%, #3b4154 57%, #2b3042 66%, #4a5170 74%, #666f9b 85%, #3d4560 91%, #23283a 96%, #3c4254 100%);
}
.start svg { width: 40px; height: 38px; }
.tasks { display: flex; gap: 4px; margin: 0 auto 0 13px; }
.task { position: relative; display: grid; place-items: center; width: 58px; margin: 1px 0; }
.task svg { width: 30px; height: 30px; }
.task.open { border: 1px solid rgba(205, 212, 228, .75); border-radius: 3px; background: linear-gradient(135deg, rgba(255, 255, 255, .35), rgba(255, 255, 255, .1) 50%, rgba(255, 255, 255, .2)); box-shadow: 0 0 0 1px rgba(0, 0, 0, .5); }
.task.stack { width: 51px; margin-right: 7px; box-shadow: 3px 0 0 -1px #444d66, 4px 0 0 0 rgba(205, 212, 228, .6); }
.task.current { background: linear-gradient(135deg, #a9aebb, #d0d1d6 60%, #b3b4b9); border-color: #eee; }
.glyph-s { font: bold 17px "Liberation Sans", sans-serif; fill: #ff9a2e; }
.tray { display: flex; align-items: center; gap: 8px; }
.tray svg, .q { width: 16px; height: 16px; }
.q { background: #c8161d; text-align: center; line-height: 16px; font-size: 13px; }
.clock { display: flex; flex-direction: column; align-items: center; width: 54px; margin: 0 10px 0 7px; font-size: 11px; line-height: 17px; white-space: nowrap; }
.show-desktop { width: 14px; border: 1px solid #777f92; background: linear-gradient(135deg, #62697c, #262b3a 60%); }
```
